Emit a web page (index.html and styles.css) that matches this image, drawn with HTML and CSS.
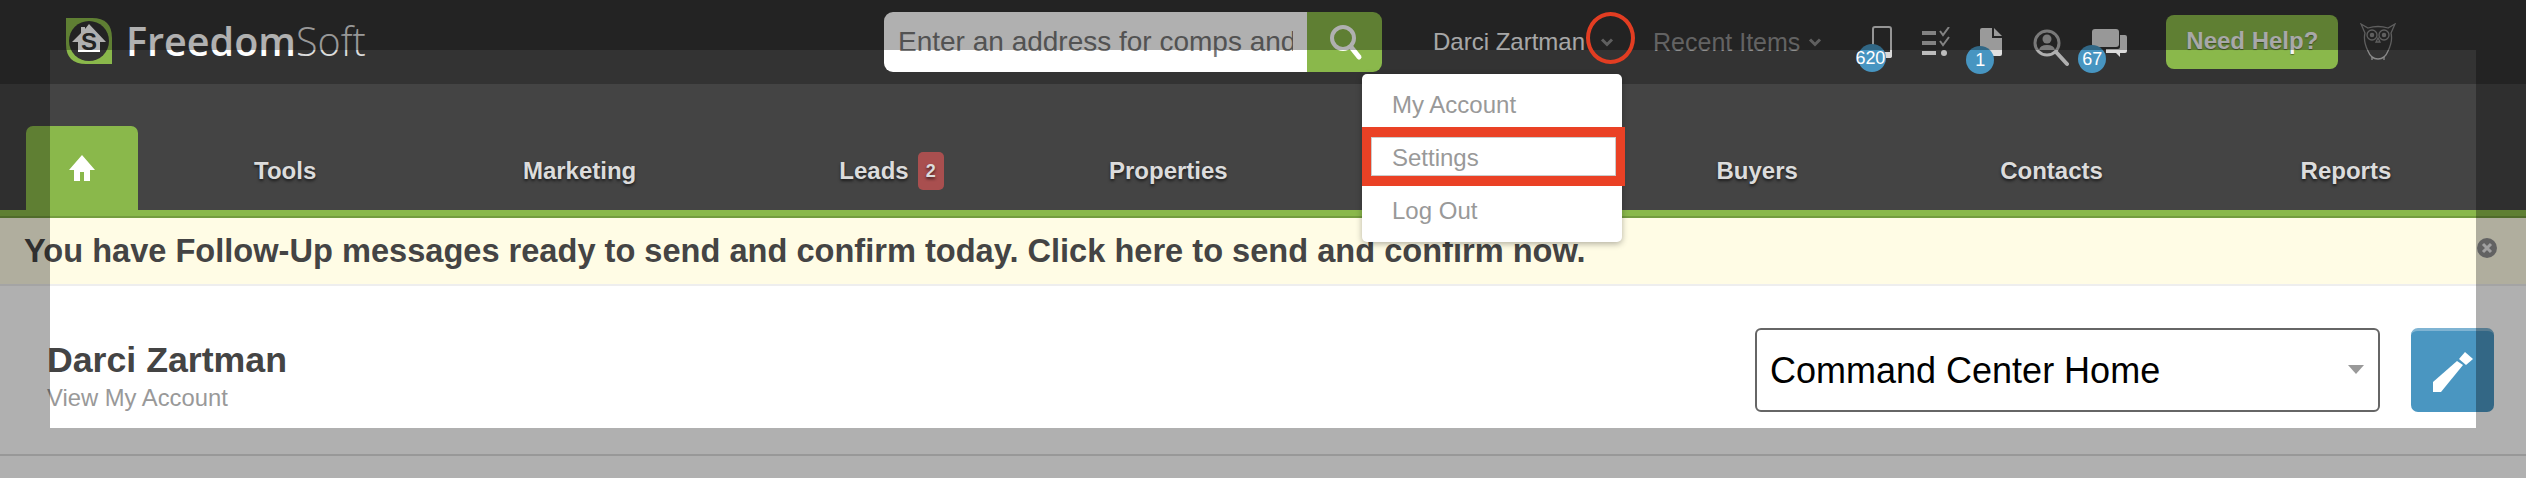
FILE: index.html
```html
<!DOCTYPE html>
<html lang="en">
<head>
    <meta charset="UTF-8">
    <title>FreedomSoft</title>
    <link rel="stylesheet" href="styles.css">
</head>
<body>
    <!-- Top bar -->
    <header class="topbar">
        <a class="logo">
            <svg class="logo-mark" width="46" height="46" viewBox="0 0 46 46">
                <path d="M0 0H26Q46 0 46 20V46H20Q0 46 0 26Z" fill="#8ab84b"/>
                <circle cx="23" cy="23" r="20" fill="#333"/>
                <path d="M23 6L19 11V9H15V15L6 24H12V34H34V24H40Z" fill="#fff"/>
                <text x="23" y="32" class="logo-s">S</text>
            </svg>
            <span class="logo-text"><b>Freedom</b>Soft</span>
        </a>

        <div class="search">
            <input type="text" class="search-input" placeholder="Enter an address for comps and">
            <button class="search-btn">
                <svg width="36" height="40" viewBox="0 0 36 40"><circle cx="16" cy="16" r="11" fill="none" stroke="#fff" stroke-width="4"/><path d="M24 25L32 35" stroke="#fff" stroke-width="5" stroke-linecap="round"/></svg>
            </button>
        </div>

        <span class="user-name">Darci Zartman</span>
        <svg class="chevron user-chevron" width="14" height="9" viewBox="0 0 14 9"><path d="M2 1.5L7 6.5L12 1.5" fill="none" stroke="#8a8a8a" stroke-width="3"/></svg>

        <span class="recent">Recent Items</span>
        <svg class="chevron" width="14" height="9" viewBox="0 0 14 9"><path d="M2 1.5L7 6.5L12 1.5" fill="none" stroke="#8a8a8a" stroke-width="3"/></svg>

        <div class="icons">
            <div class="icon-box icon-phone">
                <svg width="20" height="32" viewBox="0 0 20 32"><rect x="1" y="1" width="18" height="30" rx="2" fill="none" stroke="#d8d8d8" stroke-width="2"/><rect y="26" width="20" height="6" rx="2" fill="#d8d8d8"/></svg>
                <span class="badge">620</span>
            </div>
            <div class="icon-box icon-tasks">
                <svg width="28" height="30" viewBox="0 0 28 30" fill="#bdbdbd"><rect y="4" width="14" height="4"/><rect y="14" width="14" height="4"/><rect y="24" width="14" height="4"/><path d="M18 4L21 8L27 0M18 14L21 18L27 10" fill="none" stroke="#bdbdbd" stroke-width="2"/><circle cx="22" cy="26" r="3"/></svg>
            </div>
            <div class="icon-box icon-doc">
                <svg width="22" height="28" viewBox="0 0 22 28" fill="#e0e0e0"><path d="M2 0H12V10H22V26Q22 28 20 28H2Q0 28 0 26V2Q0 0 2 0Z"/><path d="M14 0L22 8H14Z"/></svg>
                <span class="badge">1</span>
            </div>
            <div class="icon-box icon-find">
                <svg width="36" height="38" viewBox="0 0 36 38"><circle cx="14" cy="14" r="12" fill="none" stroke="#b0b0b0" stroke-width="3"/><circle cx="14" cy="10" r="4.5" fill="#b0b0b0"/><path d="M6 21Q7 16 14 16Q21 16 22 21Z" fill="#b0b0b0"/><path d="M23 23L34 35" stroke="#b0b0b0" stroke-width="4" stroke-linecap="round"/></svg>
            </div>
            <div class="icon-box icon-chat">
                <svg width="35" height="29" viewBox="0 0 35 29" fill="#dcdcdc"><path d="M28 6H33Q35 6 35 8V22Q35 24 33 24H28V28L24 24H14V20H26Q28 20 28 18Z"/><rect width="27" height="18" rx="3"/></svg>
                <span class="badge">67</span>
            </div>
        </div>

        <a class="help-btn">Need Help?</a>

        <svg class="owl" width="36" height="38" viewBox="0 0 36 38" fill="none" stroke="#8a8a8a" stroke-width="1.3">
            <path d="M1 1L8 5Q18 2 28 5L35 1L31 10Q33 18 28 28Q25 36 18 36Q11 36 8 28Q3 18 5 10Z"/>
            <circle cx="12" cy="12" r="5"/><circle cx="24" cy="12" r="5"/><circle cx="12" cy="12" r="1.6" fill="#8a8a8a"/><circle cx="24" cy="12" r="1.6" fill="#8a8a8a"/>
            <path d="M18 15L16 19H20ZM12 37V34M24 37V34"/>
        </svg>
    </header>

    <!-- Main nav -->
    <nav class="mainnav">
        <a class="home-tab">
            <svg width="26" height="26" viewBox="0 0 26 26" fill="#fff"><path d="M13 0L26 15H21V26H15V17H11V26H5V15H0Z"/></svg>
        </a>
        <div class="nav-items">
            <a class="nav-item">Tools</a>
            <a class="nav-item">Marketing</a>
            <a class="nav-item"><span class="nav-label">Leads<span class="nav-count">2</span></span></a>
            <a class="nav-item">Properties</a>
            <a class="nav-item"></a>
            <a class="nav-item">Buyers</a>
            <a class="nav-item">Contacts</a>
            <a class="nav-item">Reports</a>
        </div>
    </nav>
    <div class="greenbar"></div>

    <div class="alert">
        <span>You have Follow-Up messages ready to send and confirm today. Click here to send and confirm now.</span>
        <svg class="alert-close" width="20" height="20" viewBox="0 0 20 20"><circle cx="10" cy="10" r="10" fill="#8f8f8f"/><path d="M6 6L14 14M14 6L6 14" stroke="#e8e8e8" stroke-width="3"/></svg>
    </div>

    <section class="account-row">
        <div class="account-info">
            <h1>Darci Zartman</h1>
            <a class="account-link">View My Account</a>
        </div>
        <div class="account-actions">
            <div class="select-box">
                <span>Command Center Home</span>
                <i class="select-arrow"></i>
            </div>
            <button class="edit-btn">
                <svg width="40" height="40" viewBox="0 0 40 40" fill="#fff"><path d="M0 40V30L24 9L30 13L8 40Z"/><path d="M32 0L40 7L33 13L26 7Z"/></svg>
            </button>
        </div>
    </section>
    <div class="page-rule"></div>

    <!-- Tour mask -->
    <div class="mask"></div>

    <!-- Dropdown and tour marks sit above the mask -->
    <ul class="user-menu">
        <li>My Account</li>
        <li>Settings</li>
        <li>Log Out</li>
    </ul>
    <div class="mark-box"></div>
    <div class="mark-circle"></div>
</body>
</html>
```

FILE: styles.css
```css
/* Basic Reset */
* {
    margin: 0;
    padding: 0;
    box-sizing: border-box;
}

html, body {
    width: 2526px;
    height: 478px;
    overflow: hidden;
}

body {
    position: relative;
    font-family: "Liberation Sans", Arial, sans-serif;
    background-color: #fff;
    color: #444;
}

/* Top bar */
.topbar {
    height: 84px;
    background-color: #333;
    display: flex;
    align-items: center;
    padding-left: 66px;
}

.logo {
    display: flex;
    align-items: center;
    width: 818px;
    height: 46px;
    margin-top: -2px;
}

.logo-s {
    font-family: "Liberation Sans", Arial, sans-serif;
    font-size: 24px;
    font-weight: bold;
    text-anchor: middle;
    fill: #333;
}

.logo-text {
    margin-left: 14px;
    font-family: "Open Sans", sans-serif;
    font-size: 39.5px;
    font-weight: 300;
    color: #ddd;
}

.logo-text b {
    font-weight: 600;
    color: #fff;
}

.search {
    display: flex;
    width: 498px;
    height: 60px;
    border-radius: 9px;
    overflow: hidden;
}

.search-input {
    flex: 1;
    min-width: 0;
    border: none;
    outline: none;
    padding: 0 14px;
    font-family: inherit;
    font-size: 28px;
    color: #777;
}

.search-input::placeholder {
    color: #777;
    opacity: 1;
}

.search-btn {
    width: 75px;
    border: none;
    background-color: #8ab84b;
    display: flex;
    align-items: center;
    justify-content: center;
}

.user-name {
    margin-left: 51px;
    font-size: 24px;
    color: #f2f2f2;
}

.chevron {
    flex: none;
}

.user-chevron {
    margin-left: 15px;
}

.recent {
    margin-left: 39px;
    font-size: 25px;
    color: #8f8f8f;
}

.recent + .chevron {
    margin-left: 8px;
}

/* Icon row */
.icons {
    position: relative;
    display: flex;
    width: 300px;
    height: 84px;
    margin-left: 50px;
}

.icon-box {
    position: absolute;
}

.icon-phone { left: 0; top: 26px; }
.icon-tasks { left: 50px; top: 27px; }
.icon-doc { left: 108px; top: 28px; }
.icon-find { left: 161px; top: 29px; }
.icon-chat { left: 220px; top: 29px; }

.icon-box svg {
    display: block;
}

.badge {
    position: absolute;
    top: 17px;
    left: -14px;
    width: 28px;
    height: 28px;
    border-radius: 50%;
    background-color: #4795c1;
    color: #fff;
    font-size: 18px;
    line-height: 28px;
    text-align: center;
    white-space: nowrap;
}

.icon-phone .badge { top: 18px; }
.icon-doc .badge { top: 18px; }
.icon-chat .badge { top: 16px; }

.icon-phone .badge {
    text-indent: -4px;
    letter-spacing: -0.2px;
}

.help-btn {
    width: 172px;
    height: 54px;
    margin-left: -6px;
    border-radius: 8px;
    background-color: #8ab84b;
    color: #f4f4f4;
    font-size: 24px;
    font-weight: bold;
    line-height: 52px;
    text-align: center;
    text-shadow: 0 1px 1px rgba(0, 0, 0, 0.4);
}

.owl {
    margin-left: 22px;
}

/* Main nav */
.mainnav {
    height: 126px;
    background-color: #444;
    display: flex;
    align-items: flex-end;
    padding-left: 26px;
}

.home-tab {
    width: 112px;
    height: 84px;
    background-color: #8ab84b;
    border-radius: 7px 7px 0 0;
    display: flex;
    align-items: center;
    justify-content: center;
}

.nav-items {
    display: grid;
    grid-template-columns: repeat(8, 294.4px);
    height: 84px;
}

.nav-item {
    display: flex;
    align-items: center;
    justify-content: center;
    padding-top: 5px;
    color: #dcdcdc;
    font-size: 24px;
    font-weight: bold;
    text-shadow: 0 2px 3px rgba(0, 0, 0, 0.6);
}

.nav-label {
    position: relative;
}

.nav-count {
    position: absolute;
    left: 100%;
    top: -5px;
    margin-left: 9px;
    width: 26px;
    height: 38px;
    border-radius: 5px;
    background-color: #a94f4f;
    font-size: 18px;
    line-height: 38px;
    text-align: center;
}

.greenbar {
    height: 8px;
    background-color: #8ab84b;
    border-bottom: 2px solid #749c3f;
}

/* Alert */
.alert {
    height: 66px;
    background-color: #fffce5;
    display: flex;
    align-items: center;
    justify-content: space-between;
    padding: 0 29px 0 24px;
    font-size: 32.6px;
    font-weight: bold;
}

.alert-close {
    margin-top: -6px;
}

/* Account row */
.account-row {
    height: 170px;
    border-top: 2px solid #eee;
    display: flex;
    justify-content: space-between;
    padding: 42px 32px 0 47px;
}

.account-info h1 {
    margin-top: 12px;
    font-size: 35.7px;
    line-height: 40px;
}

.account-link {
    display: block;
    margin-top: 4px;
    font-size: 23.8px;
    color: #999;
}

.account-actions {
    display: flex;
    gap: 31px;
    height: 84px;
}

.select-box {
    width: 625px;
    border: 2px solid #666;
    border-radius: 6px;
    display: flex;
    align-items: center;
    justify-content: space-between;
    padding: 2px 14px 0 13px;
    font-size: 36px;
    color: #000;
}

.select-arrow {
    border-left: 8px solid transparent;
    border-right: 8px solid transparent;
    border-top: 9px solid #999;
    margin-top: -4px;
}

.edit-btn {
    width: 83px;
    border: none;
    border-top: 3px solid #7fb4d3;
    border-radius: 7px;
    background-color: #4a96c1;
    display: flex;
    align-items: center;
    justify-content: center;
}

.page-rule {
    height: 2px;
    background-color: #ddd;
}

/* Tour mask: the hole is the element, the shadow is the dimmed part */
.mask {
    position: absolute;
    left: 50px;
    top: 50px;
    width: 2426px;
    height: 378px;
    box-shadow: 0 0 0 2600px rgba(0, 0, 0, 0.31);
}

.user-menu {
    position: absolute;
    left: 1362px;
    top: 74px;
    width: 260px;
    height: 168px;
    padding-top: 5px;
    list-style: none;
    background-color: #fff;
    border-radius: 5px;
    box-shadow: 0 2px 6px rgba(0, 0, 0, 0.3);
}

.user-menu li {
    height: 53px;
    line-height: 52px;
    padding-left: 30px;
    font-size: 24px;
    color: #999;
}

.mark-box {
    position: absolute;
    left: 1362px;
    top: 127px;
    width: 263px;
    height: 59px;
    border: 9px solid #ea4125;
    border-width: 10px 9px;
    box-shadow: inset 0 0 0 1px #ccc;
}

.mark-circle {
    position: absolute;
    left: 1586px;
    top: 12px;
    width: 49px;
    height: 52px;
    border: 4px solid #e23d22;
    border-radius: 50%;
}
```
